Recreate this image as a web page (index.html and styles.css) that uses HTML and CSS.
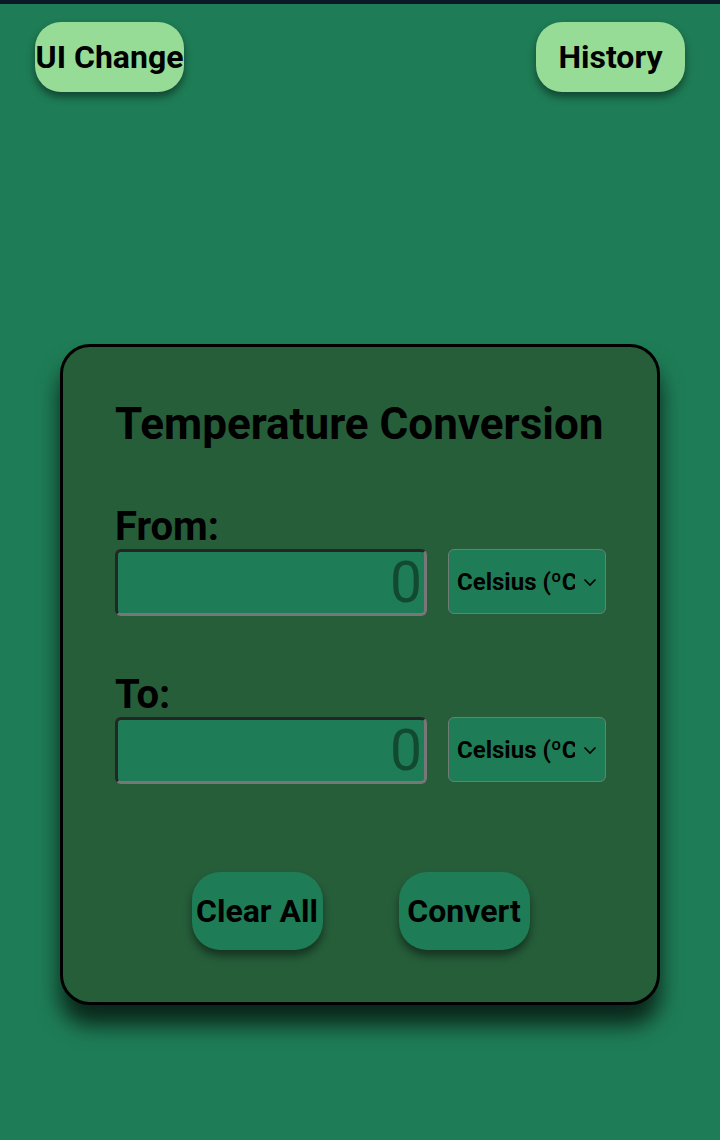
FILE: index.html
```html
<!DOCTYPE html>
<html>
<head>
<meta charset="utf-8">
<link rel="stylesheet" href="styles.css">
</head>
<body>
<div class="topbar"></div>
<header class="header">
  <button class="pill">UI Change</button>
  <button class="pill">History</button>
</header>
<main class="card">
  <h1 class="title">Temperature Conversion</h1>
  <section class="group">
    <label class="label">From:</label>
    <div class="row">
      <div class="field"><span class="ph">0</span></div>
      <div class="select"><span class="sel-text">Celsius (ºC)</span>
        <svg class="chev" width="14" height="9" viewBox="0 0 14 9"><path d="M1.5 1.5 L7 7 L12.5 1.5" fill="none" stroke="#000" stroke-width="1.6"/></svg>
      </div>
    </div>
  </section>
  <section class="group to">
    <label class="label">To:</label>
    <div class="row">
      <div class="field"><span class="ph">0</span></div>
      <div class="select"><span class="sel-text">Celsius (ºC)</span>
        <svg class="chev" width="14" height="9" viewBox="0 0 14 9"><path d="M1.5 1.5 L7 7 L12.5 1.5" fill="none" stroke="#000" stroke-width="1.6"/></svg>
      </div>
    </div>
  </section>
  <div class="actions">
    <button class="act">Clear All</button>
    <button class="act">Convert</button>
  </div>
</main>
</body>
</html>
```
FILE: styles.css
```css
html, body {
  margin: 0;
  padding: 0;
}
body {
  background: #1e7d56;
  font-family: Roboto, "Liberation Sans", sans-serif;
  color: #000;
  width: 720px;
  height: 1140px;
  overflow: hidden;
}
.topbar {
  height: 4px;
  background: #0b1a24;
}
.header {
  display: flex;
  justify-content: space-between;
  padding: 18px 35px 0 35px;
}
.pill {
  width: 149px;
  height: 70px;
  border: none;
  border-radius: 26px;
  background: #96dc96;
  font-family: Roboto, sans-serif;
  font-weight: 700;
  font-size: 32px;
  color: #000;
  padding: 0;
  white-space: nowrap;
  overflow: hidden;
  box-shadow: 0 5px 8px rgba(0,0,0,0.45);
}
.card {
  width: 600px;
  height: 661px;
  box-sizing: border-box;
  margin: 252px auto 0;
  background: #265e3a;
  border: 3px solid #000;
  border-radius: 30px;
  padding: 52px 51px 0 52px;
  box-shadow: 0 20px 22px rgba(0,0,0,0.7);
  display: flex;
  flex-direction: column;
}
.title {
  margin: 0;
  font-size: 44px;
  font-weight: 700;
  line-height: 50px;
}
.group {
  margin-top: 55px;
}
.group.to {
  margin-top: 56px;
}
.label {
  display: block;
  font-size: 40px;
  font-weight: 700;
  line-height: 45px;
}
.row {
  display: flex;
  align-items: flex-start;
  gap: 21px;
}
.field {
  width: 312px;
  height: 67px;
  box-sizing: border-box;
  background: #1e7d56;
  border: 3px solid;
  border-color: #252525 #777 #777 #252525;
  border-radius: 6px;
  display: flex;
  align-items: center;
  justify-content: flex-end;
  padding-right: 2px;
}
.ph {
  font-size: 57px;
  font-weight: 400;
  color: #124a30;
  line-height: 1;
}
.select {
  width: 158px;
  height: 65px;
  box-sizing: border-box;
  background: #1e7d56;
  border: 1px solid #6f7d75;
  border-radius: 6px;
  display: flex;
  align-items: center;
  padding: 0 8px 0 8px;
}
.sel-text {
  width: 118px;
  flex: none;
  overflow: hidden;
  white-space: nowrap;
  font-size: 24px;
  font-weight: 700;
}
.chev {
  margin-left: 8px;
  margin-top: 2px;
}
.actions {
  display: flex;
  justify-content: center;
  gap: 76px;
  margin-top: 88px;
}
.act {
  width: 131px;
  height: 78px;
  border: none;
  border-radius: 28px;
  background: #1e7d56;
  font-family: Roboto, sans-serif;
  font-weight: 700;
  font-size: 32px;
  color: #000;
  padding: 0;
  white-space: nowrap;
  overflow: hidden;
  box-shadow: 0 6px 9px rgba(0,0,0,0.45);
}
```
